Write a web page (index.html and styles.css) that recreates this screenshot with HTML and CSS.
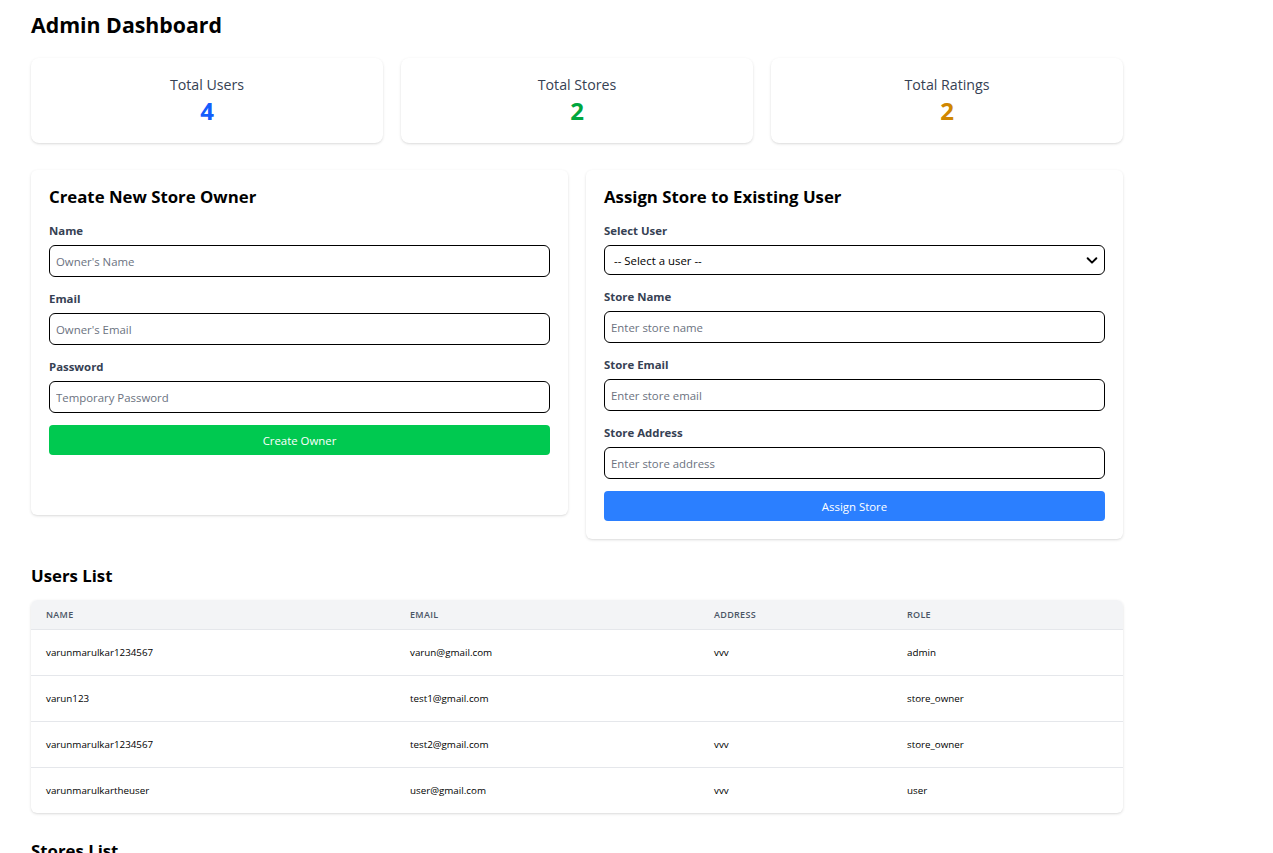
FILE: index.html
```html
<!DOCTYPE html>
<html lang="en">
<head>
<meta charset="utf-8">
<title>Admin Dashboard</title>
<link rel="stylesheet" href="styles.css">
</head>
<body>
<main class="page">
  <h1 class="title">Admin Dashboard</h1>

  <section class="stats">
    <div class="stat-card">
      <div class="stat-label">Total Users</div>
      <div class="stat-value blue">4</div>
    </div>
    <div class="stat-card">
      <div class="stat-label">Total Stores</div>
      <div class="stat-value green">2</div>
    </div>
    <div class="stat-card">
      <div class="stat-label">Total Ratings</div>
      <div class="stat-value amber">2</div>
    </div>
  </section>

  <section class="forms">
    <form class="card card-short">
      <h2 class="card-title">Create New Store Owner</h2>
      <label class="field">
        <span class="field-label">Name</span>
        <input class="input" type="text" placeholder="Owner's Name">
      </label>
      <label class="field">
        <span class="field-label">Email</span>
        <input class="input" type="email" placeholder="Owner's Email">
      </label>
      <label class="field">
        <span class="field-label">Password</span>
        <input class="input" type="password" placeholder="Temporary Password">
      </label>
      <button class="btn btn-green" type="button">Create Owner</button>
    </form>

    <form class="card">
      <h2 class="card-title">Assign Store to Existing User</h2>
      <label class="field">
        <span class="field-label">Select User</span>
        <span class="select-wrap">
          <select class="select">
            <option>-- Select a user --</option>
          </select>
          <svg class="chevron" viewBox="0 0 16 16" width="14" height="14"><path d="M3 6l5 5 5-5" fill="none" stroke="#000" stroke-width="2.2" stroke-linecap="round" stroke-linejoin="round"/></svg>
        </span>
      </label>
      <label class="field">
        <span class="field-label">Store Name</span>
        <input class="input" type="text" placeholder="Enter store name">
      </label>
      <label class="field">
        <span class="field-label">Store Email</span>
        <input class="input" type="email" placeholder="Enter store email">
      </label>
      <label class="field">
        <span class="field-label">Store Address</span>
        <input class="input" type="text" placeholder="Enter store address">
      </label>
      <button class="btn btn-blue" type="button">Assign Store</button>
    </form>
  </section>

  <h2 class="section-title">Users List</h2>
  <div class="table-card">
    <table class="table">
      <colgroup>
        <col class="c-name"><col class="c-email"><col class="c-addr"><col class="c-role">
      </colgroup>
      <thead>
        <tr><th>Name</th><th>Email</th><th>Address</th><th>Role</th></tr>
      </thead>
      <tbody>
        <tr><td>varunmarulkar1234567</td><td>varun@gmail.com</td><td>vvv</td><td>admin</td></tr>
        <tr><td>varun123</td><td>test1@gmail.com</td><td></td><td>store_owner</td></tr>
        <tr><td>varunmarulkar1234567</td><td>test2@gmail.com</td><td>vvv</td><td>store_owner</td></tr>
        <tr><td>varunmarulkartheuser</td><td>user@gmail.com</td><td>vvv</td><td>user</td></tr>
      </tbody>
    </table>
  </div>

  <h2 class="section-title stores">Stores List</h2>
</main>
</body>
</html>
```

FILE: styles.css
```css
* { box-sizing: border-box; }

html, body {
  margin: 0;
  padding: 0;
  background: #fff;
}

body {
  font-family: "Open Sans", "Noto Sans", sans-serif;
  color: #000;
}

.page {
  width: 1092px;
  margin-left: 31px;
  padding-top: 10px;
}

.title {
  margin: 0;
  font-size: 21.3px;
  line-height: 30px;
  font-weight: 700;
}

.stats {
  display: grid;
  grid-template-columns: repeat(3, 1fr);
  gap: 18px;
  margin-top: 18px;
}

.stat-card {
  height: 85px;
  background: #fff;
  border-radius: 8px;
  box-shadow: 0 1px 3px rgba(0,0,0,0.12), 0 1px 2px -1px rgba(0,0,0,0.1);
  display: flex;
  flex-direction: column;
  align-items: center;
  padding-top: 17px;
}

.stat-label {
  font-size: 14.2px;
  line-height: 20px;
  color: #364153;
}

.stat-value {
  font-size: 24px;
  line-height: 30px;
  font-weight: 700;
  margin-top: 1px;
}
.blue { color: #155dfc; }
.green { color: #00a63e; }
.amber { color: #d08700; }

.forms {
  display: grid;
  grid-template-columns: 1fr 1fr;
  gap: 18px;
  margin-top: 27px;
  align-items: start;
}

.card {
  background: #fff;
  border-radius: 6px;
  box-shadow: 0 1px 3px rgba(0,0,0,0.12), 0 1px 2px -1px rgba(0,0,0,0.1);
  padding: 15px 18px 18px;
  display: flex;
  flex-direction: column;
}

.card-short {
  padding-bottom: 60px;
}

.card-title {
  margin: 0 0 13px;
  font-size: 16.8px;
  line-height: 24px;
  font-weight: 700;
}

.field {
  display: flex;
  flex-direction: column;
  margin-bottom: 13px;
}

.field:last-of-type {
  margin-bottom: 12px;
}

.field-label {
  font-size: 11.4px;
  line-height: 18px;
  font-weight: 700;
  color: #364153;
  margin-bottom: 5px;
}

.input,
.select {
  width: 100%;
  height: 32px;
  border: 1px solid #000;
  border-radius: 6px;
  padding: 0 6px;
  font-family: inherit;
  font-size: 11.4px;
  color: #000;
  background: #fff;
  outline: none;
}

.input::placeholder {
  color: #6b7280;
}

.select-wrap {
  position: relative;
  display: block;
}

.select {
  height: 30px;
  appearance: none;
  -webkit-appearance: none;
  padding-left: 9px;
}

.chevron {
  position: absolute;
  right: 6px;
  top: 8px;
  pointer-events: none;
}

.btn {
  height: 30px;
  border: none;
  border-radius: 4px;
  color: #fff;
  font-family: inherit;
  font-size: 11.4px;
  cursor: pointer;
}
.btn-green { background: #00c950; }
.btn-blue { background: #2b7fff; }

.section-title {
  margin: 25px 0 12px;
  font-size: 16.8px;
  line-height: 24px;
  font-weight: 700;
}

.table-card {
  border-radius: 6px;
  overflow: hidden;
  box-shadow: 0 1px 3px rgba(0,0,0,0.12), 0 1px 2px -1px rgba(0,0,0,0.1);
}

.table {
  width: 100%;
  border-collapse: collapse;
  table-layout: fixed;
}

.c-name { width: 364px; }
.c-email { width: 304px; }
.c-addr { width: 193px; }
.c-role { width: 231px; }

.table th {
  background: #f3f4f6;
  height: 29px;
  text-align: left;
  font-size: 9px;
  font-weight: 600;
  letter-spacing: 0.3px;
  text-transform: uppercase;
  color: #4a5565;
  padding: 0 15px;
}

.table td {
  height: 46px;
  border-top: 1px solid #e5e7eb;
  font-size: 9.8px;
  color: #000;
  padding: 0 15px;
}

.stores {
  margin-top: 26px;
}
```
